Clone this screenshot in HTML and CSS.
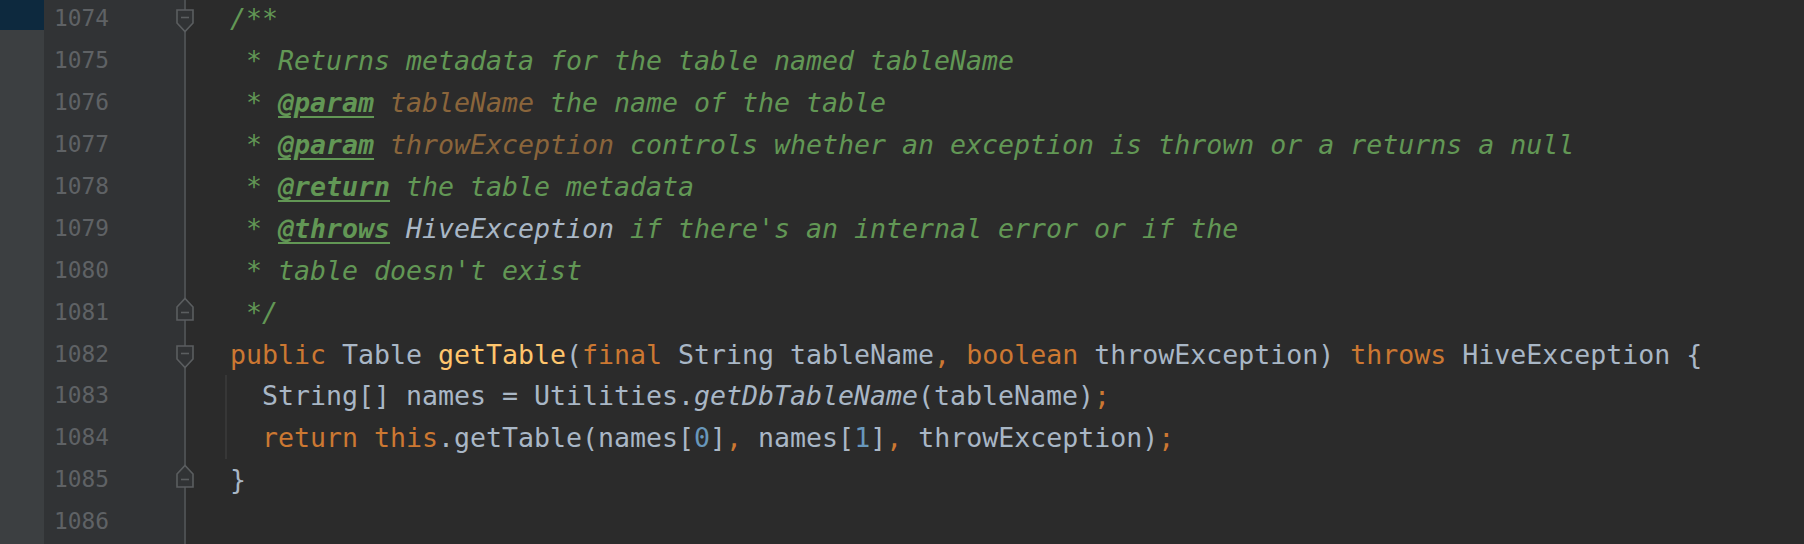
FILE: index.html
```html
<!DOCTYPE html>
<html>
<head>
<meta charset="utf-8">
<link rel="stylesheet" href="styles.css">
</head>
<body>
<div class="editor">
  <div class="strip"><div class="strip-sel"></div></div>
  <div class="gutter">
    <div class="rows">
      <div class="num">1074<svg class="fold fold-start" width="18" height="24" viewBox="0 0 18 24"><path d="M1 1H17V14L9 22.5L1 14Z"/><path d="M5 8.5H13"/></svg></div>
      <div class="num">1075</div>
      <div class="num">1076</div>
      <div class="num">1077</div>
      <div class="num">1078</div>
      <div class="num">1079</div>
      <div class="num">1080</div>
      <div class="num">1081<svg class="fold fold-end" width="18" height="24" viewBox="0 0 18 24"><path d="M1 23H17V10L9 1.5L1 10Z"/><path d="M5 15.5H13"/></svg></div>
      <div class="num">1082<svg class="fold fold-start" width="18" height="24" viewBox="0 0 18 24"><path d="M1 1H17V14L9 22.5L1 14Z"/><path d="M5 8.5H13"/></svg></div>
      <div class="num">1083</div>
      <div class="num">1084</div>
      <div class="num">1085<svg class="fold fold-end" width="18" height="24" viewBox="0 0 18 24"><path d="M1 23H17V10L9 1.5L1 10Z"/><path d="M5 15.5H13"/></svg></div>
      <div class="num">1086</div>
    </div>
  </div>
  <div class="code">
    <div class="rows">
      <div class="line c">/**</div>
      <div class="line c"> * Returns metadata for the table named tableName</div>
      <div class="line c"> * <span class="tag">@param</span> <span class="pv">tableName</span> the name of the table</div>
      <div class="line c"> * <span class="tag">@param</span> <span class="pv">throwException</span> controls whether an exception is thrown or a returns a null</div>
      <div class="line c"> * <span class="tag">@return</span> the table metadata</div>
      <div class="line c"> * <span class="tag">@throws</span> <span class="ref">HiveException</span> if there's an internal error or if the</div>
      <div class="line c"> * table doesn't exist</div>
      <div class="line c"> */</div>
      <div class="line"><span class="kw">public</span> Table <span class="md">getTable</span>(<span class="kw">final</span> String tableName<span class="kw">,</span> <span class="kw">boolean</span> throwException) <span class="kw">throws</span> HiveException {</div>
      <div class="block">
        <div class="line">  String[] names = Utilities.<span class="st">getDbTableName</span>(tableName)<span class="kw">;</span></div>
        <div class="line">  <span class="kw">return this</span>.getTable(names[<span class="nm">0</span>]<span class="kw">,</span> names[<span class="nm">1</span>]<span class="kw">,</span> throwException)<span class="kw">;</span></div>
      </div>
      <div class="line">}</div>
      <div class="line"> </div>
    </div>
  </div>
</div>
</body>
</html>
```

FILE: styles.css
```css
html, body {
  margin: 0;
  padding: 0;
  background: #2b2b2b;
}
.editor {
  display: flex;
  width: 1804px;
  height: 544px;
  overflow: hidden;
}
.strip {
  width: 44px;
  flex: none;
  background: #3c3f41;
}
.strip-sel {
  height: 30px;
  background: #0d293e;
}
.gutter {
  width: 142px;
  flex: none;
  box-sizing: border-box;
  background: #313335;
  border-right: 2px solid #4b4e50;
}
.rows {
  margin-top: -2px;
}
.num {
  position: relative;
  height: 41.94px;
  line-height: 41.94px;
  padding-left: 10px;
  font-family: "DejaVu Sans Mono", monospace;
  font-size: 22.84px;
  color: #5f6265;
}
.fold {
  position: absolute;
  right: -10px;
  fill: #313335;
  stroke: #5b5e60;
  stroke-width: 1.6;
}
.fold-start {
  top: 11px;
}
.fold-end {
  top: 5px;
}
.code {
  flex: 1;
  background: #2b2b2b;
  padding-left: 44px;
}
.line {
  height: 41.94px;
  line-height: 41.94px;
  white-space: pre;
  font-family: "DejaVu Sans Mono", monospace;
  font-size: 26.58px;
  color: #a9b7c6;
}
.block {
  margin-left: -5px;
  padding-left: 3px;
  border-left: 2px solid #373737;
}
.c {
  color: #629755;
  font-style: italic;
}
.tag {
  font-weight: bold;
  text-decoration: underline;
  text-underline-offset: 4px;
}
.pv {
  color: #8a653b;
}
.ref {
  color: #a9b7c6;
}
.kw {
  color: #cc7832;
}
.md {
  color: #ffc66d;
}
.nm {
  color: #6897bb;
}
.st {
  font-style: italic;
}
```
